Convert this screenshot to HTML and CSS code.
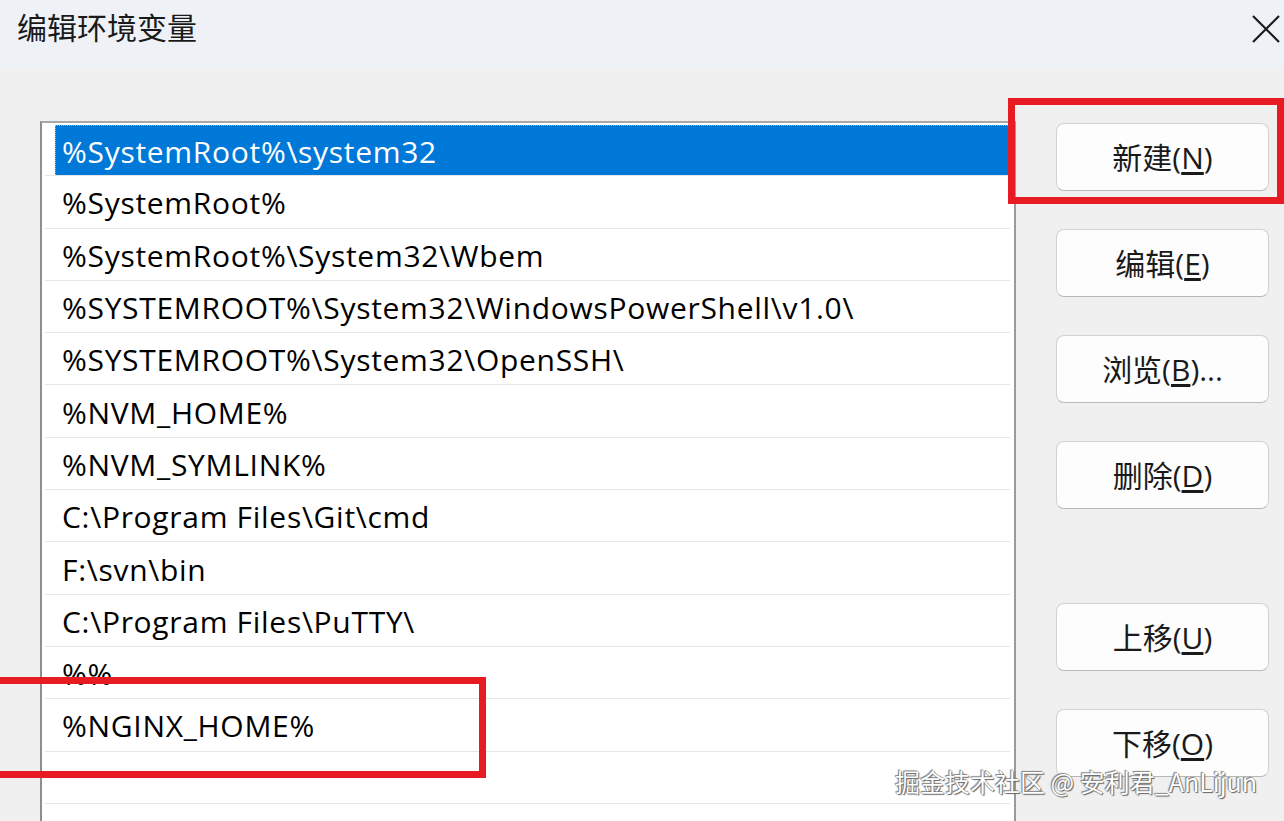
FILE: index.html
```html
<!DOCTYPE html>
<html lang="zh-CN">
<head>
<meta charset="utf-8">
<title>编辑环境变量</title>
<link rel="stylesheet" href="styles.css">
</head>
<body>
<div class="window">
  <header class="titlebar">
    <div class="title">编辑环境变量</div>
    <svg class="close" viewBox="0 0 28 28" width="28" height="28"><path d="M1 1 L27 27 M27 1 L1 27" stroke="#1b1b1b" stroke-width="2.2" fill="none"/></svg>
  </header>
  <main class="content">
    <div class="listbox">
      <div class="row selected"><span class="label">%SystemRoot%\system32</span></div>
      <div class="row"><span class="label">%SystemRoot%</span></div>
      <div class="row"><span class="label">%SystemRoot%\System32\Wbem</span></div>
      <div class="row"><span class="label">%SYSTEMROOT%\System32\WindowsPowerShell\v1.0\</span></div>
      <div class="row"><span class="label">%SYSTEMROOT%\System32\OpenSSH\</span></div>
      <div class="row"><span class="label">%NVM_HOME%</span></div>
      <div class="row"><span class="label">%NVM_SYMLINK%</span></div>
      <div class="row"><span class="label">C:\Program Files\Git\cmd</span></div>
      <div class="row"><span class="label">F:\svn\bin</span></div>
      <div class="row"><span class="label">C:\Program Files\PuTTY\</span></div>
      <div class="row"><span class="label">%%</span></div>
      <div class="row"><span class="label">%NGINX_HOME%</span></div>
      <div class="row"><span class="label"></span></div>
      <div class="row"><span class="label"></span></div>
    </div>
    <div class="buttons">
      <button class="btn">新建(<u>N</u>)</button>
      <button class="btn">编辑(<u>E</u>)</button>
      <button class="btn">浏览(<u>B</u>)...</button>
      <button class="btn">删除(<u>D</u>)</button>
      <button class="btn btn-gap">上移(<u>U</u>)</button>
      <button class="btn">下移(<u>O</u>)</button>
    </div>
  </main>
  <div class="mark mark-new"></div>
  <div class="mark mark-nginx"></div>
  <div class="watermark">掘金技术社区 @ 安利君_AnLijun</div>
</div>
</body>
</html>
```
FILE: styles.css
```css
* { box-sizing: border-box; }
html, body {
  margin: 0;
  padding: 0;
  width: 1284px;
  height: 821px;
  overflow: hidden;
  background: #f0f0f0;
  font-family: "Open Sans", "Noto Sans CJK SC", sans-serif;
}
.window {
  position: relative;
  width: 1284px;
  height: 821px;
  overflow: hidden;
}
.titlebar {
  height: 68px;
  background: #eef2f7;
  display: flex;
  align-items: center;
  justify-content: space-between;
  padding: 0 4px 16px 17px;
}
.title {
  font-family: "Noto Sans CJK SC", sans-serif;
  font-size: 30px;
  color: #1a1a1a;
  line-height: 1;
}
.close {
  display: block;
  margin-top: 6px;
}
.content {
  display: flex;
  align-items: flex-start;
  padding: 53px 0 0 40px;
}
.listbox {
  width: 976px;
  height: 720px;
  background: #ffffff;
  border-left: 2px solid #8e8e8e;
  border-top: 2px solid #a8a8a8;
  border-right: 2px solid #9a9a9a;
  padding: 1px 4px 0 3px;
  flex-shrink: 0;
}
.row {
  height: 52.3px;
  border-bottom: 1px solid #e6e6e6;
  display: flex;
  align-items: stretch;
  padding-left: 10px;
}
.label {
  display: flex;
  align-items: center;
  padding: 2px 0 0 7px;
  font-size: 30px;
  letter-spacing: 0.7px;
  color: #000;
  white-space: nowrap;
}
.selected .label {
  flex: 1;
  background: #0078d7;
  color: #fff;
  margin-top: 1px;
  border-top: 1px dotted #f0a030;
  border-left: 1px dotted #f0a030;
  padding-left: 6px;
}
.buttons {
  display: flex;
  flex-direction: column;
  gap: 38px;
  margin: 2px 0 0 40px;
}
.btn {
  width: 213px;
  height: 68px;
  border: 1px solid #d2d2d2;
  border-bottom-color: #b8b8b8;
  border-radius: 8px;
  background: #fdfdfd;
  font-family: "Open Sans", "Noto Sans CJK SC", sans-serif;
  font-size: 30px;
  color: #1a1a1a;
  padding: 0 0 3px;
}
.btn u { text-underline-offset: 3px; }
.btn-gap { margin-top: 56px; }
.mark {
  position: absolute;
  border: 7px solid #e81a22;
}
.mark-new {
  left: 1008px;
  top: 98px;
  width: 276px;
  height: 106px;
}
.mark-nginx {
  left: -10px;
  top: 677px;
  width: 496px;
  height: 101px;
}
.watermark {
  position: absolute;
  left: 895px;
  top: 765px;
  font-family: "Noto Sans CJK SC", sans-serif;
  font-size: 25px;
  line-height: 32px;
  color: #ffffff;
  text-shadow: 0 0 1px #555, 1px 1px 1px #666, -1px -1px 1px #888;
  white-space: nowrap;
}
```
